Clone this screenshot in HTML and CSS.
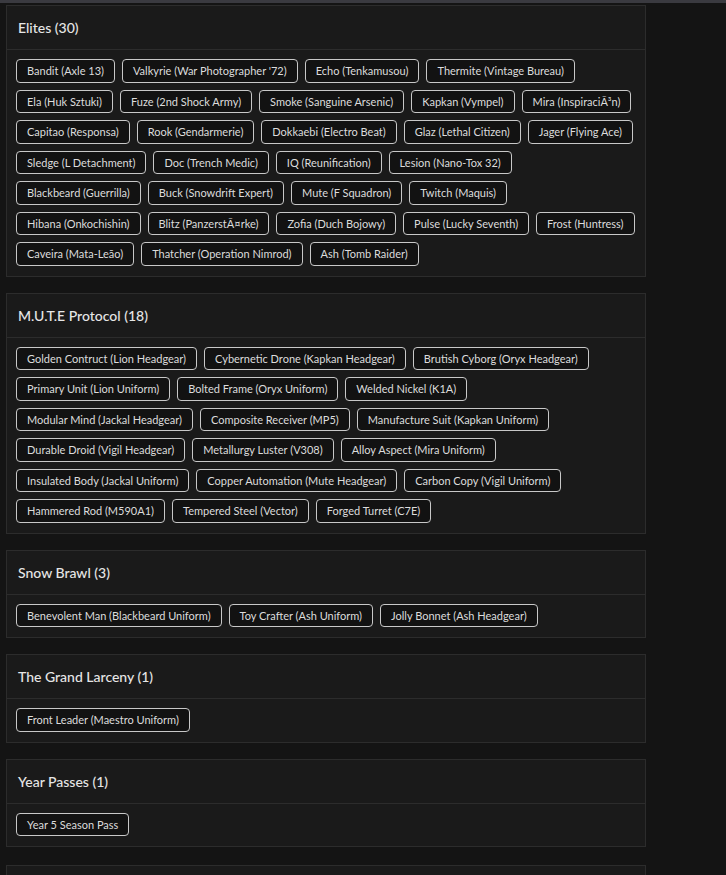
FILE: index.html
```html
<!DOCTYPE html>
<html lang="en">

<head>
  <meta charset="UTF-8" />
  <meta name="viewport" content="width=device-width, initial-scale=1.0" />
  <title>Inventory</title>
  <link rel="stylesheet" href="styles.css">
</head>

<body>
  <div class="topbar"></div>
  <div class="list">
    <div class="card">
      <div class="card-header">Elites (30)</div>
      <div class="card-body">
        <span class="chip">Bandit (Axle 13)</span>
        <span class="chip">Valkyrie (War Photographer '72)</span>
        <span class="chip">Echo (Tenkamusou)</span>
        <span class="chip">Thermite (Vintage Bureau)</span>
        <span class="chip">Ela (Huk Sztuki)</span>
        <span class="chip">Fuze (2nd Shock Army)</span>
        <span class="chip">Smoke (Sanguine Arsenic)</span>
        <span class="chip">Kapkan (Vympel)</span>
        <span class="chip">Mira (InspiraciÃ³n)</span>
        <span class="chip">Capitao (Responsa)</span>
        <span class="chip">Rook (Gendarmerie)</span>
        <span class="chip">Dokkaebi (Electro Beat)</span>
        <span class="chip">Glaz (Lethal Citizen)</span>
        <span class="chip">Jager (Flying Ace)</span>
        <span class="chip">Sledge (L Detachment)</span>
        <span class="chip">Doc (Trench Medic)</span>
        <span class="chip">IQ (Reunification)</span>
        <span class="chip">Lesion (Nano-Tox 32)</span>
        <span class="chip">Blackbeard (Guerrilla)</span>
        <span class="chip">Buck (Snowdrift Expert)</span>
        <span class="chip">Mute (F Squadron)</span>
        <span class="chip">Twitch (Maquis)</span>
        <span class="chip">Hibana (Onkochishin)</span>
        <span class="chip">Blitz (PanzerstÃ¤rke)</span>
        <span class="chip">Zofia (Duch Bojowy)</span>
        <span class="chip">Pulse (Lucky Seventh)</span>
        <span class="chip">Frost (Huntress)</span>
        <span class="chip">Caveira (Mata-Leão)</span>
        <span class="chip">Thatcher (Operation Nimrod)</span>
        <span class="chip">Ash (Tomb Raider)</span>
      </div>
    </div>

    <div class="card">
      <div class="card-header">M.U.T.E Protocol (18)</div>
      <div class="card-body">
        <span class="chip">Golden Contruct (Lion Headgear)</span>
        <span class="chip">Cybernetic Drone (Kapkan Headgear)</span>
        <span class="chip">Brutish Cyborg (Oryx Headgear)</span>
        <span class="chip">Primary Unit (Lion Uniform)</span>
        <span class="chip">Bolted Frame (Oryx Uniform)</span>
        <span class="chip">Welded Nickel (K1A)</span>
        <span class="chip">Modular Mind (Jackal Headgear)</span>
        <span class="chip">Composite Receiver (MP5)</span>
        <span class="chip">Manufacture Suit (Kapkan Uniform)</span>
        <span class="chip">Durable Droid (Vigil Headgear)</span>
        <span class="chip">Metallurgy Luster (V308)</span>
        <span class="chip">Alloy Aspect (Mira Uniform)</span>
        <span class="chip">Insulated Body (Jackal Uniform)</span>
        <span class="chip">Copper Automation (Mute Headgear)</span>
        <span class="chip">Carbon Copy (Vigil Uniform)</span>
        <span class="chip">Hammered Rod (M590A1)</span>
        <span class="chip">Tempered Steel (Vector)</span>
        <span class="chip">Forged Turret (C7E)</span>
      </div>
    </div>

    <div class="card">
      <div class="card-header">Snow Brawl (3)</div>
      <div class="card-body">
        <span class="chip">Benevolent Man (Blackbeard Uniform)</span>
        <span class="chip">Toy Crafter (Ash Uniform)</span>
        <span class="chip">Jolly Bonnet (Ash Headgear)</span>
      </div>
    </div>

    <div class="card">
      <div class="card-header">The Grand Larceny (1)</div>
      <div class="card-body">
        <span class="chip">Front Leader (Maestro Uniform)</span>
      </div>
    </div>

    <div class="card">
      <div class="card-header">Year Passes (1)</div>
      <div class="card-body">
        <span class="chip">Year 5 Season Pass</span>
      </div>
    </div>

    <!-- next section starts just below the fold -->
    <div class="card card-more"></div>
  </div>
</body>

</html>
```

FILE: styles.css
```css
* {
  box-sizing: border-box;
}

body {
  margin: 0;
  background: #141414;
  color: #e2e2e2;
  font-family: Lato, sans-serif;
}

.topbar {
  height: 3px;
  background: #3a3a40;
}

.list {
  display: flex;
  flex-direction: column;
  gap: 16px;
  width: 640px;
  margin: 2px 0 0 6px;
}

.card {
  background: #1a1a1a;
  border: 1px solid #2c2c2c;
}

.card-more {
  height: 44px;
  margin-top: 2px;
}

.card-header {
  height: 44px;
  padding: 0 11px;
  display: flex;
  align-items: center;
  font-size: 14px;
  font-weight: 500;
  color: #e6e6e6;
  border-bottom: 1px solid #2c2c2c;
}

.card-body {
  display: flex;
  flex-wrap: wrap;
  gap: 7px 7px;
  padding: 9px 9px 10px;
}

.chip {
  height: 23.5px;
  padding: 0 10px;
  display: flex;
  align-items: center;
  font-size: 11px;
  color: #dcdcdc;
  background: #121212;
  border: 1px solid #c8c8c8;
  border-radius: 4px;
}
```
